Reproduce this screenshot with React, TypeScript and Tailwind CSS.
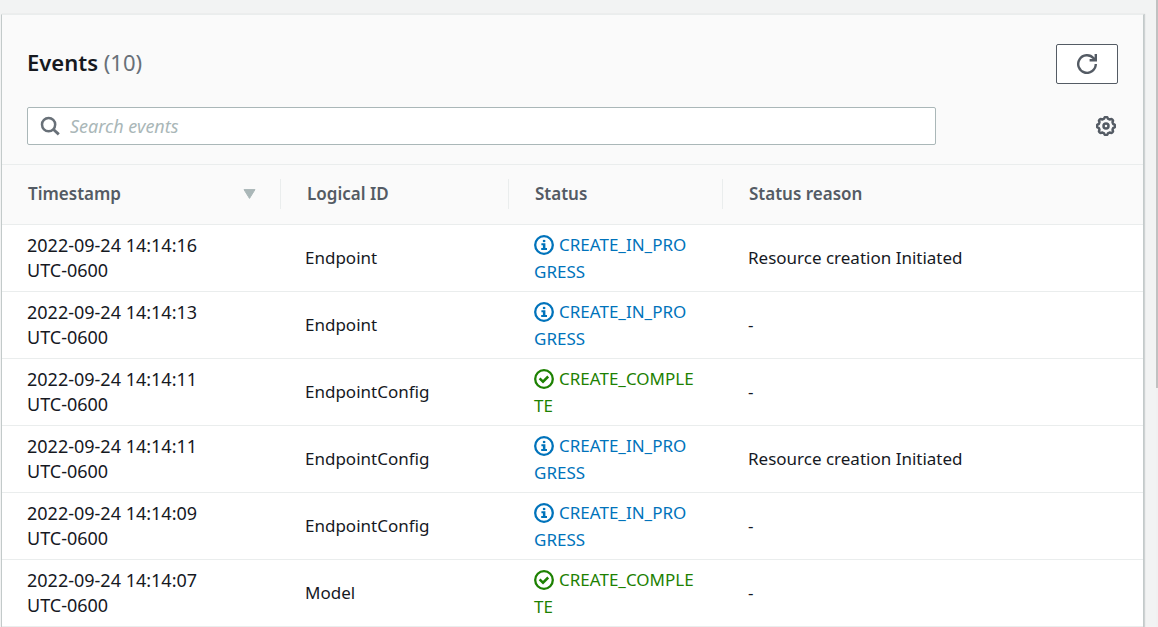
import React from "react";

type Status = "CREATE_IN_PROGRESS" | "CREATE_COMPLETE";

interface StackEvent {
  date: string;
  logicalId: string;
  status: Status;
  reason: string;
}

const events: StackEvent[] = [
  { date: "2022-09-24 14:14:16", logicalId: "Endpoint", status: "CREATE_IN_PROGRESS", reason: "Resource creation Initiated" },
  { date: "2022-09-24 14:14:13", logicalId: "Endpoint", status: "CREATE_IN_PROGRESS", reason: "-" },
  { date: "2022-09-24 14:14:11", logicalId: "EndpointConfig", status: "CREATE_COMPLETE", reason: "-" },
  { date: "2022-09-24 14:14:11", logicalId: "EndpointConfig", status: "CREATE_IN_PROGRESS", reason: "Resource creation Initiated" },
  { date: "2022-09-24 14:14:09", logicalId: "EndpointConfig", status: "CREATE_IN_PROGRESS", reason: "-" },
  { date: "2022-09-24 14:14:07", logicalId: "Model", status: "CREATE_COMPLETE", reason: "-" },
];

function InfoIcon() {
  return (
    <svg className="mr-[5px] inline-block size-5 align-[-4px]" viewBox="0 0 20 20" fill="none" stroke="currentColor" aria-hidden="true">
      <circle cx="10" cy="10" r="8.8" strokeWidth="2.3" />
      <path d="M8.9 4.9h2.4v2.2H8.9z" fill="currentColor" stroke="none" />
      <path d="M7.4 8.3h4v4.7h1.6V15.100H7.200V13h1.700v-2.700H7.400z" fill="currentColor" stroke="none" />
    </svg>
  );
}

function SuccessIcon() {
  return (
    <svg className="mr-[5px] inline-block size-5 align-[-4px]" viewBox="0 0 20 20" fill="none" stroke="currentColor" aria-hidden="true">
      <circle cx="10" cy="10" r="8.8" strokeWidth="2.3" />
      <path d="M5.6 9.4l3.400 3.300 5.200-5.200" strokeWidth="2.5" />
    </svg>
  );
}

function RefreshIcon() {
  return (
    <svg className="size-5" viewBox="0 0 20 20" fill="none" stroke="currentColor" strokeWidth="2.400" aria-hidden="true">
      <path d="M18.8 10A8.8 8.8 0 1 1 16.600 4.200L18 6" />
      <path d="M18.8 0v6.200H12.600" />
      <path d="M18.8 2.500v3.700h-3.700z" fill="currentColor" stroke="none" />
    </svg>
  );
}

function gearPath(): string {
  const points: string[] = [];
  for (let i = 0; i <= 96; i++) {
    const angle = (i / 96) * Math.PI * 2;
    const wave = Math.max(-0.75, Math.min(0.75, Math.cos(angle * 8) * 1.3));
    const r = 8.2 + wave;
    points.push(`${(10 + r * Math.sin(angle)).toFixed(2)} ${(10 - r * Math.cos(angle)).toFixed(2)}`);
  }
  return `M${points.join("L")}Z`;
}

function GearIcon() {
  return (
    <svg className="size-5" viewBox="0 0 20 20" fill="none" stroke="currentColor" aria-hidden="true">
      <path d={gearPath()} strokeWidth="2.5" strokeLinejoin="round" />
      <circle cx="10" cy="10" r="2.5" strokeWidth="2.5" />
    </svg>
  );
}

function SearchIcon() {
  return (
    <svg className="size-5 shrink-0 text-[#687078]" viewBox="0 0 20 20" fill="none" stroke="currentColor" strokeWidth="2.5" aria-hidden="true">
      <circle cx="8.6" cy="8.6" r="6.6" />
      <path d="M13.2 13.2l5.600 5.200" strokeWidth="2.8" />
    </svg>
  );
}

function StatusLabel({ status }: { status: Status }) {
  const complete = status === "CREATE_COMPLETE";
  return (
    <span className={complete ? "text-[#1d8102]" : "text-[#0073bb]"}>
      {complete ? <SuccessIcon /> : <InfoIcon />}
      {status}
    </span>
  );
}

function HeaderCell({ children, last = false }: { children: React.ReactNode; last?: boolean }) {
  return (
    <th scope="col" className="border-y border-[#eaeded] p-0 pb-[2px] text-left font-semibold">
      <div className={`flex h-[30px] items-center justify-between pr-6 pl-[26px] ${last ? "" : "border-r border-[#eaeded]"}`}>
        {children}
      </div>
    </th>
  );
}

export default function App() {
  return (
    <div className="flex min-h-screen bg-[#f2f3f3] font-['Noto_Sans',sans-serif] text-[17px] text-[#16191f]">
      <main className="min-w-0 flex-1 pt-[14px] pr-3 pl-px">
        <section className="min-h-full border-x border-t border-x-[#c3caca] border-t-[#eaeded] bg-white shadow-[1px_0_1px_rgba(0,28,36,0.15)]">
          <div className="bg-[#fafafa] pt-[29px] pr-[25px] pb-[19px] pl-[25px]">
            <div className="flex items-center justify-between">
              <h2 className="pb-1 text-[22px] leading-7 font-semibold">
                Events <span className="font-normal text-[#687078]">(10)</span>
              </h2>
              <button type="button" aria-label="Refresh" className="flex h-10 w-[62px] items-center justify-center rounded-[2px] border border-[#545b64] bg-white text-[#545b64]">
                <RefreshIcon />
              </button>
            </div>
            <div className="mt-[23px] flex items-center justify-between">
              <label className="flex h-[38px] w-5/6 items-center gap-[10px] rounded-[2px] border border-[#aab7b8] bg-white px-3">
                <SearchIcon />
                <input type="search" aria-label="Search events" placeholder="Search events" className="min-w-0 flex-1 bg-transparent text-[18px] outline-none placeholder:text-[#aab7b8] placeholder:italic" />
              </label>
              <button type="button" aria-label="Preferences" className="mr-[2px] text-[#545b64]">
                <GearIcon />
              </button>
            </div>
          </div>
          <table className="w-full table-fixed border-separate border-spacing-0">
            <colgroup>
              <col className="w-[279px]" />
              <col className="w-[228px]" />
              <col className="w-[214px]" />
              <col />
            </colgroup>
            <thead className="bg-[#fafafa] text-[#545b64]">
              <tr className="h-[61px]">
                <HeaderCell>
                  Timestamp
                  <svg className="h-[10px] w-[13px] text-[#aab7b8]" viewBox="0 0 13 10" fill="currentColor" stroke="currentColor" strokeLinejoin="round" aria-hidden="true">
                    <path d="M1 .6h11L6.500 9.400z" />
                  </svg>
                </HeaderCell>
                <HeaderCell>Logical ID</HeaderCell>
                <HeaderCell>Status</HeaderCell>
                <HeaderCell last>Status reason</HeaderCell>
              </tr>
            </thead>
            <tbody>
              {events.map((event, index) => (
                <tr key={index} className="h-[67px]">
                  <td className="border-b border-[#eaeded] py-0 pr-6 pl-[25px] text-[18px] leading-[25px]">
                    <time className="block">{event.date}</time>
                    <span className="block">UTC-0600</span>
                  </td>
                  <td className="border-b border-[#eaeded] py-0 pr-6 pl-6">{event.logicalId}</td>
                  <td className="border-b border-[#eaeded] py-[6px] pr-7 pl-[25px] leading-[27px] break-all">
                    <StatusLabel status={event.status} />
                  </td>
                  <td className="border-b border-[#eaeded] py-0 pr-6 pl-[25px]">{event.reason}</td>
                </tr>
              ))}
            </tbody>
          </table>
        </section>
      </main>
      <div className="w-[2px] bg-[#f1f1f1]" aria-hidden="true">
        <div className="h-[388px] bg-[#c1c1c1]" />
      </div>
    </div>
  );
}
